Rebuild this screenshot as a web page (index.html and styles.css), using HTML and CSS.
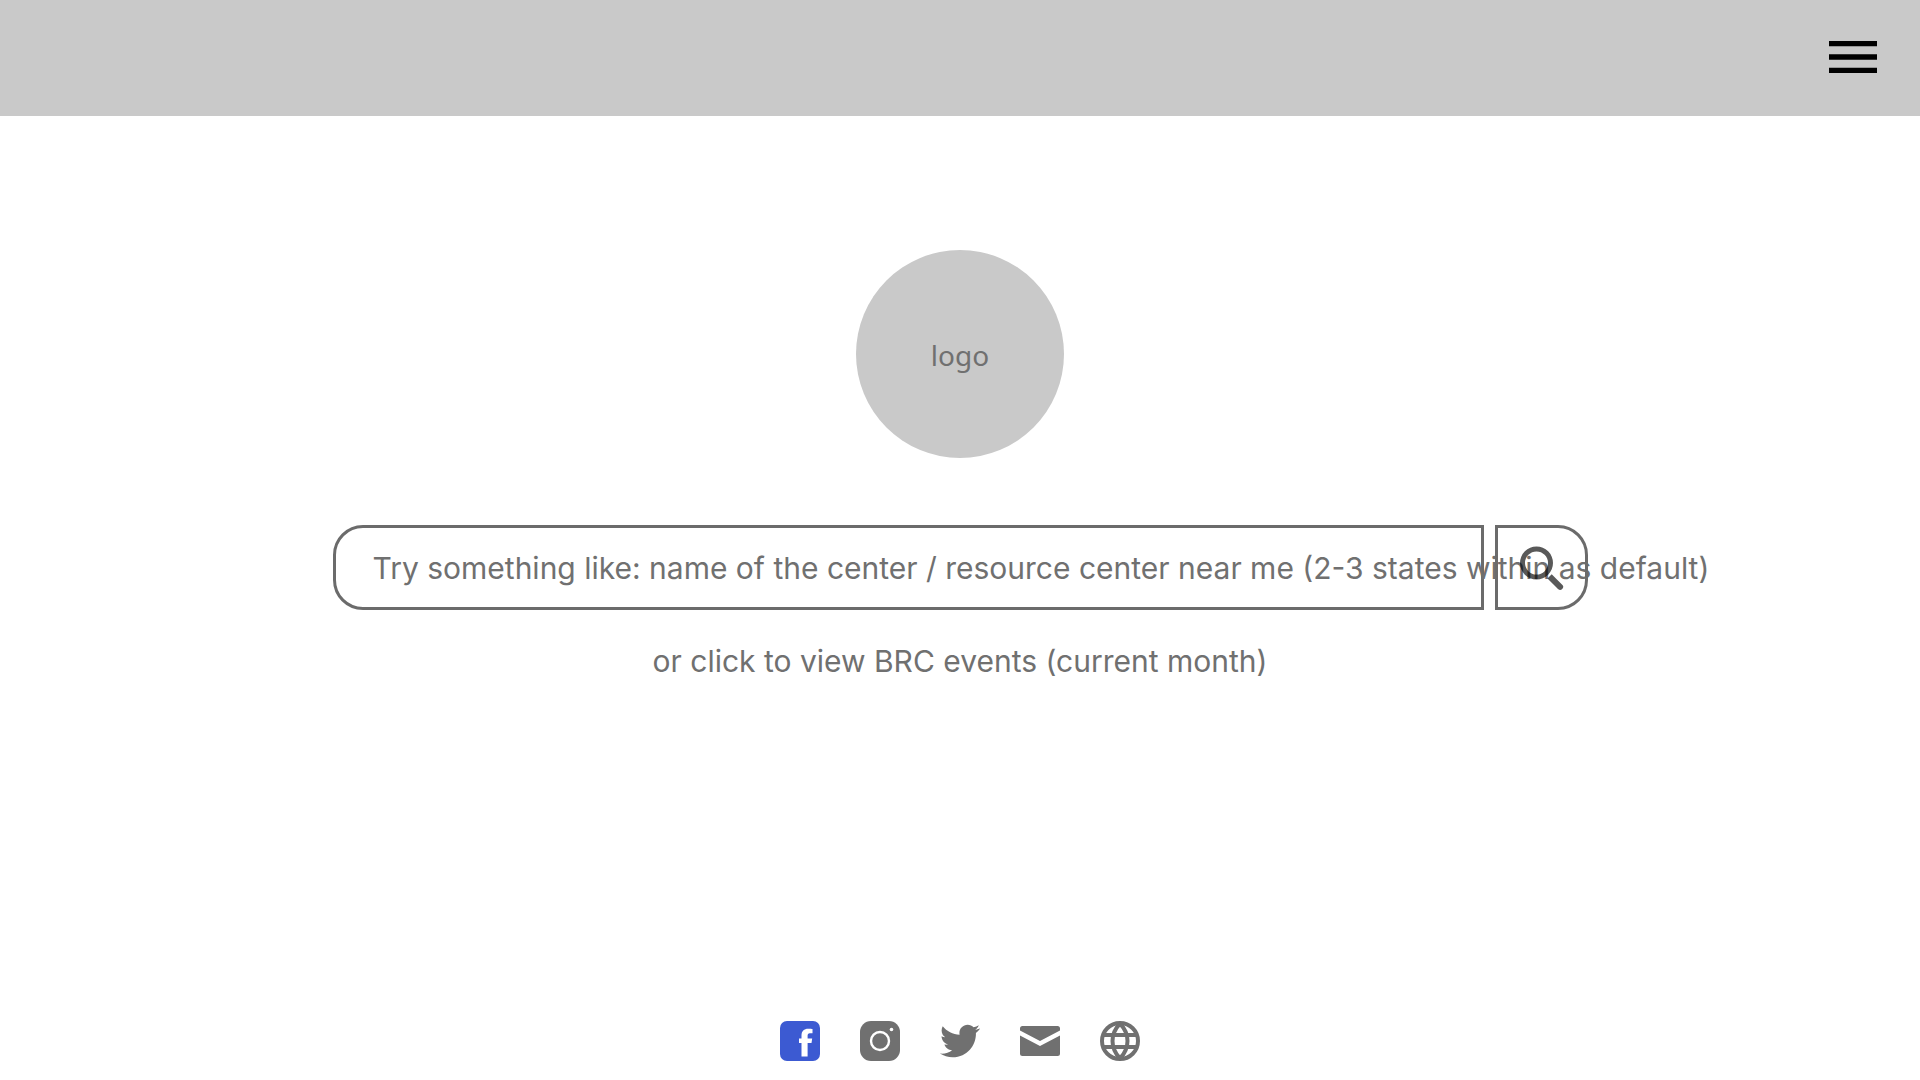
FILE: index.html
```html
<!DOCTYPE html>
<html lang="en">
<head>
  <meta charset="utf-8">
  <meta name="viewport" content="width=device-width, initial-scale=1">
  <title>BRC</title>
  <link rel="stylesheet" href="styles.css">
</head>
<body>
  <header class="top-bar">
    <button class="menu-button" type="button" aria-label="Menu">
      <svg viewBox="0 0 24 24" width="64" height="64"><path d="M3 18h18v-2H3v2zm0-5h18v-2H3v2zm0-7v2h18V6H3z"/></svg>
    </button>
  </header>

  <main class="content">
    <div class="logo">logo</div>
    <form class="search">
      <input class="search-input" id="search" type="text">
      <label class="search-label" for="search">Try something like: name of the center / resource center near me (2-3 states within as default)</label>
      <button class="search-button" type="submit" aria-label="Search">
        <svg class="search-icon" viewBox="0 0 46 46" width="46" height="46">
          <path d="M18.500 1.500a16.500 16.500 0 1 0 0 33a16.500 16.500 0 1 0 0-33zM18.500 6.500a11.500 11.500 0 1 1 0 23a11.500 11.500 0 1 1 0-23zM29.500 33.500L33.700 29.300L44.200 39.700A3 3 0 0 1 40 44z" fill-rule="evenodd"/>
        </svg>
      </button>
    </form>
    <a class="events-link" href="#">or click to view BRC events (current month)</a>
  </main>

  <footer class="social">
    <a class="social-link" href="#" aria-label="Facebook">
      <svg viewBox="0 0 40 40" width="40" height="40">
        <rect width="40" height="40" rx="7" fill="#3c5ad2"/>
        <path d="M21.500 35.500V22H19V17.500h2.500V14.500C21.500 10 24 7.700 28.200 7.700c2 0 3.700.1 4.300.2v4.400h-2.800c-1.500 0-2.100 1-2.100 2.400v2.800h4.600L31.500 22h-3.900v13.500z" fill="#fff"/>
      </svg>
    </a>
    <a class="social-link" href="#" aria-label="Instagram">
      <svg viewBox="0 0 40 40" width="40" height="40">
        <rect width="40" height="40" rx="11"/>
        <circle cx="20" cy="20" r="9" fill="none" stroke="#fff" stroke-width="2.400"/>
        <circle cx="31.500" cy="8.500" r="1.800" fill="#fff"/>
      </svg>
    </a>
    <a class="social-link" href="#" aria-label="Twitter">
      <svg viewBox="0 0 24 24" width="40" height="40"><path d="M23.954 4.569c-.885.389-1.830.654-2.825.775 1.014-.611 1.794-1.574 2.163-2.723-.951.555-2.005.959-3.127 1.184-.896-.959-2.173-1.559-3.591-1.559-2.717 0-4.920 2.203-4.920 4.917 0 .39.045.765.127 1.124C7.691 8.094 4.066 6.130 1.640 3.161c-.427.722-.666 1.561-.666 2.475 0 1.710.870 3.213 2.188 4.096-.807-.026-1.566-.248-2.228-.616v.061c0 2.385 1.693 4.374 3.946 4.827-.413.111-.849.171-1.296.171-.314 0-.615-.030-.916-.086.631 1.953 2.445 3.377 4.604 3.417-1.680 1.319-3.809 2.105-6.102 2.105-.39 0-.779-.023-1.170-.067 2.189 1.394 4.768 2.209 7.557 2.209 9.054 0 13.999-7.496 13.999-13.986 0-.209 0-.42-.015-.63.961-.689 1.800-1.560 2.460-2.548z"/></svg>
    </a>
    <a class="social-link" href="#" aria-label="Email">
      <svg viewBox="0 0 40 40" width="40" height="40"><path d="M2.500 5h35Q40 5 40 7.500V9.500L20 20L0 9.500V7.500Q0 5 2.500 5zM0 14.500L20 25L40 14.500V32.500Q40 35 37.500 35h-35Q0 35 0 32.500z"/></svg>
    </a>
    <a class="social-link" href="#" aria-label="Website">
      <svg viewBox="0 0 40 40" width="40" height="40" fill="none" stroke="currentColor" stroke-width="4">
        <circle cx="20" cy="20" r="18"/>
        <path d="M3 14h34M3 26h34M20 2.500C10 13 10 27 20 37.500M20 2.500C30 13 30 27 20 37.500"/>
      </svg>
    </a>
  </footer>
</body>
</html>
```

FILE: styles.css
```css
* {
  box-sizing: border-box;
}

body {
  display: flex;
  flex-direction: column;
  min-height: 100vh;
  margin: 0;
  background: #fff;
  color: #707070;
  font-family: Inter, "Noto Sans", sans-serif;
  font-size: 30px;
  font-weight: 380;
  line-height: 40px;
}

svg {
  display: block;
}

button {
  padding: 0;
  background: none;
  cursor: pointer;
}

.top-bar {
  display: flex;
  justify-content: flex-end;
  align-items: center;
  height: 116px;
  padding: 0 35px 2px;
  background: #c9c9c9;
}

.menu-button {
  border: 0;
}

.content {
  display: flex;
  flex: 1;
  flex-direction: column;
  align-items: center;
  padding: 134px 32px 64px;
}

.logo {
  display: grid;
  place-items: center;
  width: 208px;
  height: 208px;
  padding-top: 2px;
  border-radius: 50%;
  background: #c9c9c9;
  font-family: "Noto Sans", sans-serif;
  font-size: 28px;
  font-weight: 400;
}

.search {
  position: relative;
  display: flex;
  gap: 11px;
  width: 100%;
  max-width: 1255px;
  margin-top: 67px;
}

.search-input,
.search-button {
  height: 85px;
  border: 3px solid #6b6b6b;
}

.search-input {
  flex: 1;
  min-width: 0;
  padding: 0 37px;
  border-radius: 30px 0 0 30px;
  background: transparent;
  color: inherit;
  font: inherit;
}

.search-button {
  position: relative;
  display: grid;
  place-items: center;
  width: 93px;
  border-radius: 0 30px 30px 0;
}

.search-icon {
  fill: rgba(0, 0, 0, 0.65);
}

.search-label {
  position: absolute;
  top: 23px;
  left: 40px;
  white-space: nowrap;
  pointer-events: none;
}

.search-input:focus ~ .search-label {
  visibility: hidden;
}

.events-link {
  margin-top: 31px;
  color: inherit;
  text-decoration: none;
}

.social {
  display: flex;
  justify-content: center;
  gap: 40px;
  padding-bottom: 19px;
}

.social-link {
  color: #707070;
  fill: currentColor;
}
```
